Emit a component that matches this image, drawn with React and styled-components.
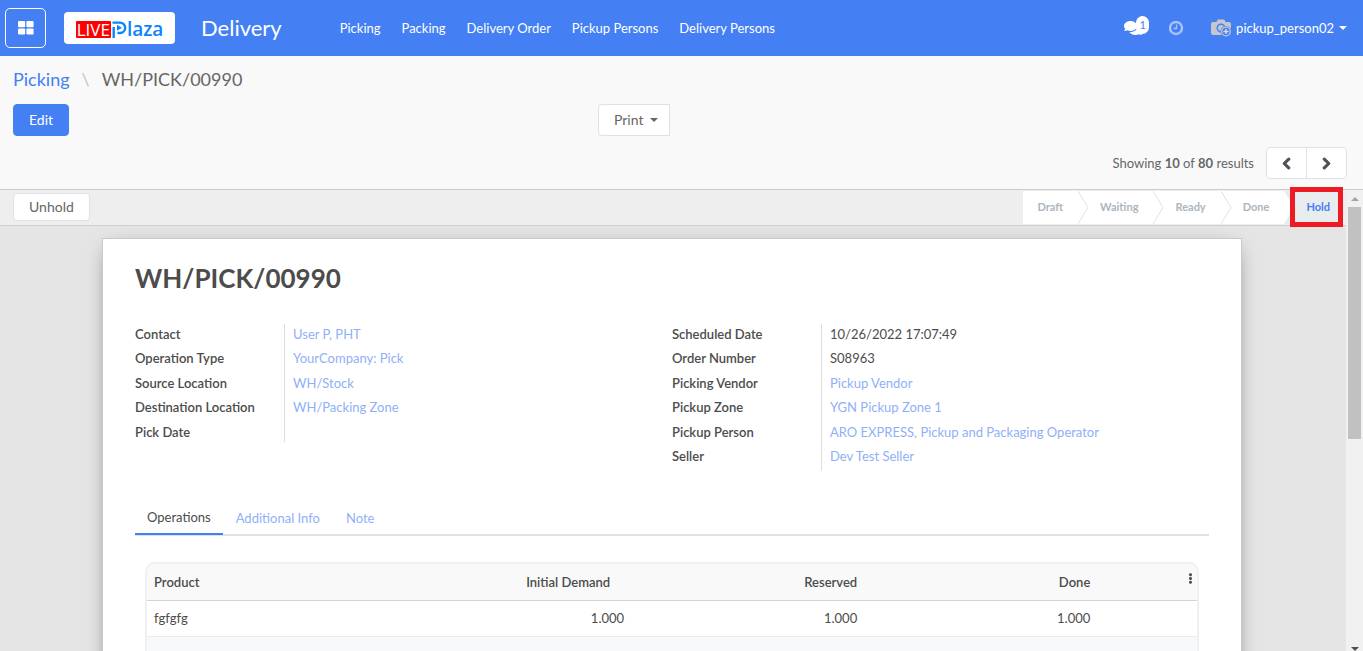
import React, { useState } from 'react';
import styled, { createGlobalStyle, css, ThemeProvider } from 'styled-components';
import { FaChevronLeft, FaChevronRight, FaComments, FaEllipsisV } from 'react-icons/fa';

const theme = {
	primary: '#447ff3',
	link: '#8fb0f8',
	text: '#4c4c4c',
	muted: '#666666',
	border: '#dee2e6',
	fontFamily: 'Lato, "Liberation Sans", sans-serif'
}

const GlobalStyle = createGlobalStyle`
	* {
		box-sizing: border-box;
	}
	body {
		margin: 0;
		font-family: ${theme.fontFamily};
		font-size: 13px;
		line-height: 20px;
		color: ${theme.text};
	}
	button {
		font-family: inherit;
		cursor: pointer;
	}
	a {
		text-decoration: none;
	}
`
const Page = styled.div`
	display: flex;
	flex-direction: column;
	height: 100vh;
	overflow: hidden;
`
const NavBar = styled.header`
	display: flex;
	align-items: center;
	flex: none;
	height: 56px;
	padding: 0 16px 0 5px;
	background: ${props => props.theme.primary};
	color: #fff;
`
const AppsButton = styled.button`
	display: flex;
	align-items: center;
	justify-content: center;
	width: 41px;
	height: 40px;
	padding: 0;
	background: transparent;
	border: 1px solid #fff;
	border-radius: 5px;
`
const Logo = styled.a`
	display: flex;
	align-items: center;
	justify-content: center;
	width: 111px;
	height: 32px;
	margin-left: 18px;
	padding-top: 2px;
	background: #fff;
	border-radius: 4px;
`
const LogoLive = styled.span`
	padding: 0 1px;
	background: #fe0000;
	border-radius: 1px;
	color: #fff;
	font: 17px/17px "Open Sans", sans-serif;
`
const LogoPlaza = styled.span`
	display: flex;
	align-items: center;
	color: #0a84ff;
	font: 600 19px/17px "Open Sans", sans-serif;
`
const AppName = styled.a`
	margin: 0 47px 0 26px;
	color: #fff;
	font-size: 22px;
	line-height: 32px;
`
const Menu = styled.nav`
	display: flex;
	gap: 21px;
	margin: 0 auto 0 11px;
`
const MenuItem = styled.a`
	color: #fff;
`
const Systray = styled.div`
	display: flex;
	align-items: center;
`
const IconButton = styled.button`
	position: relative;
	display: flex;
	margin-right: 27px;
	padding: 0;
	background: none;
	border: none;
	color: #fff;
`
const Badge = styled.span`
	position: absolute;
	top: -3px;
	right: -7px;
	width: 13px;
	height: 18px;
	border-radius: 7px;
	background: #fff;
	color: ${props => props.theme.primary};
	font-size: 11px;
	line-height: 17px;
	text-align: center;
`
const UserButton = styled.button`
	display: flex;
	align-items: center;
	padding: 0;
	background: none;
	border: none;
	color: #fff;
	font-size: 13px;
	line-height: 20px;
`
const UserName = styled.span`
	margin-left: 4px;
`
const Caret = styled.span`
	margin-left: ${props => props.$wide ? '7px' : '5px'};
	border: 4px solid transparent;
	border-top-color: currentColor;
	border-bottom: none;
`
const ControlPanel = styled.section`
	flex: none;
	padding: 11px 16px 10px 13px;
	background: #f9f9f9;
	border-bottom: 1px solid #cccccc;
`
const Breadcrumb = styled.nav`
	display: flex;
	gap: 12px;
	margin-bottom: 13px;
	color: ${props => props.theme.muted};
	font-size: 18px;
	line-height: 24px;

	a {
		color: ${props => props.theme.primary};
	}
`
const Slash = styled.span`
	color: #c4c4c4;
`
const Actions = styled.div`
	display: grid;
	grid-template-columns: 585px 1fr;
	margin-bottom: 11px;
`
const Button = styled.button`
	display: flex;
	align-items: center;
	justify-self: start;
	height: ${props => props.$small ? '28px' : '32px'};
	padding: 0 15px;
	background: #fff;
	border: 1px solid ${props => props.theme.border};
	border-radius: 4px;
	color: ${props => props.theme.muted};
	font-size: 14px;
	line-height: 20px;

	${props => props.$primary && css`
		background: ${props.theme.primary};
		border-color: ${props.theme.primary};
		color: #fff;
	`}
`
const DropdownButton = styled(Button)`
	padding-right: 11px;
	border-radius: 4px 0 0 4px;
`
const PagerRow = styled.div`
	display: flex;
	align-items: center;
	justify-content: flex-end;
	gap: 12px;
	color: ${props => props.theme.muted};

	b {
		font-weight: 700;
	}
`
const Pager = styled.div`
	display: flex;
`
const PagerButton = styled.button`
	display: flex;
	align-items: center;
	justify-content: center;
	width: 41px;
	height: 32px;
	padding: 0;
	background: #fff;
	border: 1px solid ${props => props.theme.border};
	border-radius: 4px 0 0 4px;
	color: #495057;

	svg {
		stroke: currentColor;
		stroke-width: 40px;
	}
	& + & {
		margin-left: -1px;
		border-radius: 0 4px 4px 0;
	}
`
const Body = styled.div`
	display: flex;
	flex: 1;
	min-height: 0;
`
const Content = styled.main`
	display: flex;
	flex-direction: column;
	flex: 1;
	min-width: 0;
	background: #e5e5e5;
`
const StatusBar = styled.div`
	display: flex;
	align-items: center;
	justify-content: space-between;
	flex: none;
	height: 36px;
	padding: 0 3px 1px 13px;
	background: #eeeeee;
	border-bottom: 1px solid #cfcfd2;
`
const Stages = styled.div`
	display: flex;
	height: 33px;
`
const Stage = styled.button`
	position: relative;
	height: 33px;
	padding: 0 15px 1px 11px;
	background: ${props => props.$active ? '#e9ecef' : '#fff'};
	border: none;
	color: ${props => props.$active ? props.theme.primary : '#adb5bd'};
	font-size: 11px;
	font-weight: 700;
	line-height: 20px;

	&:first-child {
		padding-left: 15px;
	}
	&:last-child {
		padding-right: 13px;
	}
`
const Marker = styled.span`
	position: absolute;
	top: -4px;
	right: 0;
	bottom: -3px;
	left: -5px;
	border: 5px solid #ed1c24;
	pointer-events: none;
`
const SheetArea = styled.div`
	flex: 1;
	min-height: 0;
	padding: 12px 2px 0 0;
	overflow: hidden;
`
const Sheet = styled.article`
	max-width: 1140px;
	min-height: 100%;
	margin: 0 auto;
	padding: 23px 32px;
	background: #fff;
	border: 1px solid #c8c8d3;
	box-shadow: 0 5px 20px -8px rgba(0, 0, 0, 0.6);
`
const Title = styled.h1`
	margin: 0 0 30px;
	font-size: 26px;
	font-weight: 700;
	line-height: 32px;
`
const Groups = styled.div`
	display: grid;
	grid-template-columns: 1fr 1fr;
	align-items: start;
	min-height: 147px;
	margin-bottom: 30px;
`
const Field = styled.div`
	display: grid;
	grid-template-columns: 150px 1fr;

	dt, dd {
		min-height: 20px;
		margin: 0;
		padding-bottom: 4px;
	}
	dt {
		border-right: 1px solid #dddddd;
		font-weight: 600;
	}
	dd {
		padding-left: 8px;
	}
	&:nth-child(even) dt, &:nth-child(even) dd {
		padding-bottom: 5px;
	}
	&:last-child:nth-child(odd) dt, &:last-child:nth-child(odd) dd {
		padding-bottom: 0;
	}
`
const FieldList = styled.dl`
	margin: 0;
`
const ValueLink = styled.a`
	color: ${props => props.theme.link};
`
const Tabs = styled.div`
	display: flex;
	border-bottom: 2px solid ${props => props.theme.border};
`
const Tab = styled.button`
	height: 34px;
	margin-bottom: -1px;
	padding: 2px 13px 0;
	background: none;
	border: none;
	border-bottom: 2px solid transparent;
	color: ${props => props.theme.link};
	font-size: 13px;
	line-height: 20px;

	${props => props.$active && css`
		position: relative;
		padding: 0 12px;
		border-color: ${props.theme.primary};
		color: ${props.theme.text};
	`}
`
const TableFrame = styled.div`
	margin: 26px 10px 0;
	border: 2px solid #eff0f1;
	border-radius: 10px;
	overflow: hidden;
`
const Table = styled.table`
	width: 100%;
	table-layout: fixed;
	border-collapse: collapse;
`
const Col = styled.col`
	width: ${props => props.$width};
`
const HeadCell = styled.th`
	height: 36px;
	padding: 0 ${props => props.$inset || '8px'} 0 7px;
	background: #f9f9f9;
	border-bottom: 1px solid #ced4da;
	font-weight: 600;
	text-align: ${props => props.$number ? 'right' : 'left'};
`
const Cell = styled.td`
	height: 36px;
	padding: 0 8px 0 7px;
	border-bottom: 1px solid #e9ecef;
	text-align: ${props => props.$number ? 'right' : 'left'};
`
const Row = styled.tr`
	background: ${props => props.$empty ? '#f8f9fb' : '#fff'};
`
const MoreButton = styled.button`
	display: inline-flex;
	padding: 0 0 8px;
	background: none;
	border: none;
	color: ${props => props.theme.text};
	vertical-align: middle;
`
const ScrollTrack = styled.div`
	display: flex;
	flex-direction: column;
	align-items: center;
	justify-content: space-between;
	flex: none;
	width: 17px;
	padding: 7px 2px 0;
	background: #f1f1f1;
`
const ScrollThumb = styled.div`
	width: 13px;
	height: 232px;
	margin: 6px 0 auto;
	background: #c1c1c1;
`
const ArrowUp = styled.span`
	border: 4px solid transparent;
	border-top: none;
	border-bottom-color: #a3a3a3;
`
const ArrowDown = styled.span`
	border: 4px solid transparent;
	border-bottom: none;
	border-top-color: #505050;
`

const menuItems = ['Picking', 'Packing', 'Delivery Order', 'Pickup Persons', 'Delivery Persons'];

const stages = ['Draft', 'Waiting', 'Ready', 'Done', 'Hold'];

const leftFields = [
	{ label: 'Contact', value: 'User P, PHT', link: true },
	{ label: 'Operation Type', value: 'YourCompany: Pick', link: true },
	{ label: 'Source Location', value: 'WH/Stock', link: true },
	{ label: 'Destination Location', value: 'WH/Packing Zone', link: true },
	{ label: 'Pick Date', value: '' }
];

const rightFields = [
	{ label: 'Scheduled Date', value: '10/26/2022 17:07:49' },
	{ label: 'Order Number', value: 'S08963' },
	{ label: 'Picking Vendor', value: 'Pickup Vendor', link: true },
	{ label: 'Pickup Zone', value: 'YGN Pickup Zone 1', link: true },
	{ label: 'Pickup Person', value: 'ARO EXPRESS, Pickup and Packaging Operator', link: true },
	{ label: 'Seller', value: 'Dev Test Seller', link: true }
];

const tabs = ['Operations', 'Additional Info', 'Note'];

const AppsIcon = () => (
	<svg width="16" height="14" viewBox="0 0 16 14" fill="#fff">
		<rect width="7.2" height="6.2" rx="1" />
		<rect x="8.4" width="7.2" height="6.2" rx="1" />
		<rect y="7.4" width="7.2" height="6.2" rx="1" />
		<rect x="8.4" y="7.4" width="7.2" height="6.2" rx="1" />
	</svg>
)

// open loop with a play mark, stands before "laza"
const PlayMark = () => (
	<svg width="16" height="17" viewBox="0 0 16 17" fill="none" stroke="#0a84ff" strokeWidth="2.400">
		<path d="M2.700 17V6M1.500 1.600h7.500a5 5 0 0 1 0 10.400H6.500" />
		<path d="M6 3.800v6L11 6.800z" fill="#0a84ff" stroke="none" />
	</svg>
)

const ClockIcon = () => (
	<svg width="15" height="15" viewBox="0 0 15 15" fill="none" stroke="#a9c4f9">
		<circle cx="7" cy="7" r="6" strokeWidth="2.400" />
		<path d="M7.500 3.500v4H4.500" strokeWidth="1.400" />
	</svg>
)

const CameraIcon = () => (
	<svg width="21" height="18" viewBox="0 0 21 18">
		<path d="M2 3h3.500l1.200-2.400h6.600L14.500 3H18a2 2 0 0 1 2 2v9a2 2 0 0 1-2 2H2a2 2 0 0 1-2-2V5a2 2 0 0 1 2-2z" fill="#c5c7cb" />
		<circle cx="10" cy="9" r="3.800" fill="none" stroke="#447ff3" strokeWidth="1.500" />
		<circle cx="15" cy="12.500" r="5.500" fill="#447ff3" />
		<circle cx="15" cy="12.500" r="4.300" fill="none" stroke="#c5c7cb" strokeWidth="1.300" />
		<path d="M15 10v5M12.500 12.500h5" stroke="#dcdde0" strokeWidth="1.400" />
	</svg>
)

const StageArrow = ({ active }) => (
	<svg width="11" height="33" viewBox="0 0 11 33">
		<rect width="11" height="33" fill={active ? '#e9ecef' : '#fff'} />
		<path d="M0 0L10 16.500L0 33" fill="#fff" stroke={active ? 'none' : '#dee2e6'} />
	</svg>
)

const FieldGroup = ({ fields }) => (
	<FieldList>
		{fields.map(field => (
			<Field key={field.label}>
				<dt>{field.label}</dt>
				<dd>{field.link ? <ValueLink href="#">{field.value}</ValueLink> : field.value}</dd>
			</Field>
		))}
	</FieldList>
)

const App = () => {
	const [activeTab, setActiveTab] = useState('Operations');

	return (
		<ThemeProvider theme={theme}>
			<GlobalStyle />
			<Page>
				<NavBar>
					<AppsButton aria-label="Applications"><AppsIcon /></AppsButton>
					<Logo href="#" aria-label="Live Plaza">
						<LogoLive>LIVE</LogoLive>
						<LogoPlaza><PlayMark />laza</LogoPlaza>
					</Logo>
					<AppName href="#">Delivery</AppName>
					<Menu>
						{menuItems.map(item => <MenuItem key={item} href="#">{item}</MenuItem>)}
					</Menu>
					<Systray>
						<IconButton aria-label="Conversations">
							<FaComments size={18} />
							<Badge>1</Badge>
						</IconButton>
						<IconButton aria-label="Activities"><ClockIcon /></IconButton>
						<UserButton>
							<CameraIcon />
							<UserName>pickup_person02</UserName>
							<Caret />
						</UserButton>
					</Systray>
				</NavBar>
				<ControlPanel>
					<Breadcrumb>
						<a href="#">Picking</a>
						<Slash>\</Slash>
						<span>WH/PICK/00990</span>
					</Breadcrumb>
					<Actions>
						<Button $primary>Edit</Button>
						<DropdownButton>Print <Caret $wide /></DropdownButton>
					</Actions>
					<PagerRow>
						<span>Showing <b>10</b> of <b>80</b> results</span>
						<Pager>
							<PagerButton aria-label="Previous"><FaChevronLeft size={13} /></PagerButton>
							<PagerButton aria-label="Next"><FaChevronRight size={13} /></PagerButton>
						</Pager>
					</PagerRow>
				</ControlPanel>
				<Body>
					<Content>
						<StatusBar>
							<Button $small>Unhold</Button>
							<Stages>
								{stages.map((stage, index) => {
									const active = stage === 'Hold';
									return (
										<React.Fragment key={stage}>
											{index > 0 && <StageArrow active={active} />}
											<Stage $active={active}>
												{stage}
												{active && <Marker />}
											</Stage>
										</React.Fragment>
									)
								})}
							</Stages>
						</StatusBar>
						<SheetArea>
							<Sheet>
								<Title>WH/PICK/00990</Title>
								<Groups>
									<FieldGroup fields={leftFields} />
									<FieldGroup fields={rightFields} />
								</Groups>
								<Tabs role="tablist">
									{tabs.map(tab => (
										<Tab
											key={tab}
											role="tab"
											aria-selected={tab === activeTab}
											$active={tab === activeTab}
											onClick={() => setActiveTab(tab)}
										>
											{tab}
										</Tab>
									))}
								</Tabs>
								<TableFrame>
									<Table>
										<colgroup>
											<Col $width="24%" />
											<Col $width="22.2%" />
											<Col $width="22.2%" />
											<Col $width="22.2%" />
											<Col />
										</colgroup>
										<thead>
											<tr>
												<HeadCell>Product</HeadCell>
												<HeadCell $number $inset="22px">Initial Demand</HeadCell>
												<HeadCell $number>Reserved</HeadCell>
												<HeadCell $number>Done</HeadCell>
												<HeadCell $number $inset="1px">
													<MoreButton aria-label="Optional columns"><FaEllipsisV size={11} /></MoreButton>
												</HeadCell>
											</tr>
										</thead>
										<tbody>
											<Row>
												<Cell>fgfgfg</Cell>
												<Cell $number>1.000</Cell>
												<Cell $number>1.000</Cell>
												<Cell $number>1.000</Cell>
												<Cell />
											</Row>
											<Row $empty>
												<Cell colSpan={5} />
											</Row>
										</tbody>
									</Table>
								</TableFrame>
							</Sheet>
						</SheetArea>
					</Content>
					<ScrollTrack>
						<ArrowUp />
						<ScrollThumb />
						<ArrowDown />
					</ScrollTrack>
				</Body>
			</Page>
		</ThemeProvider>
	)
}

export default App
